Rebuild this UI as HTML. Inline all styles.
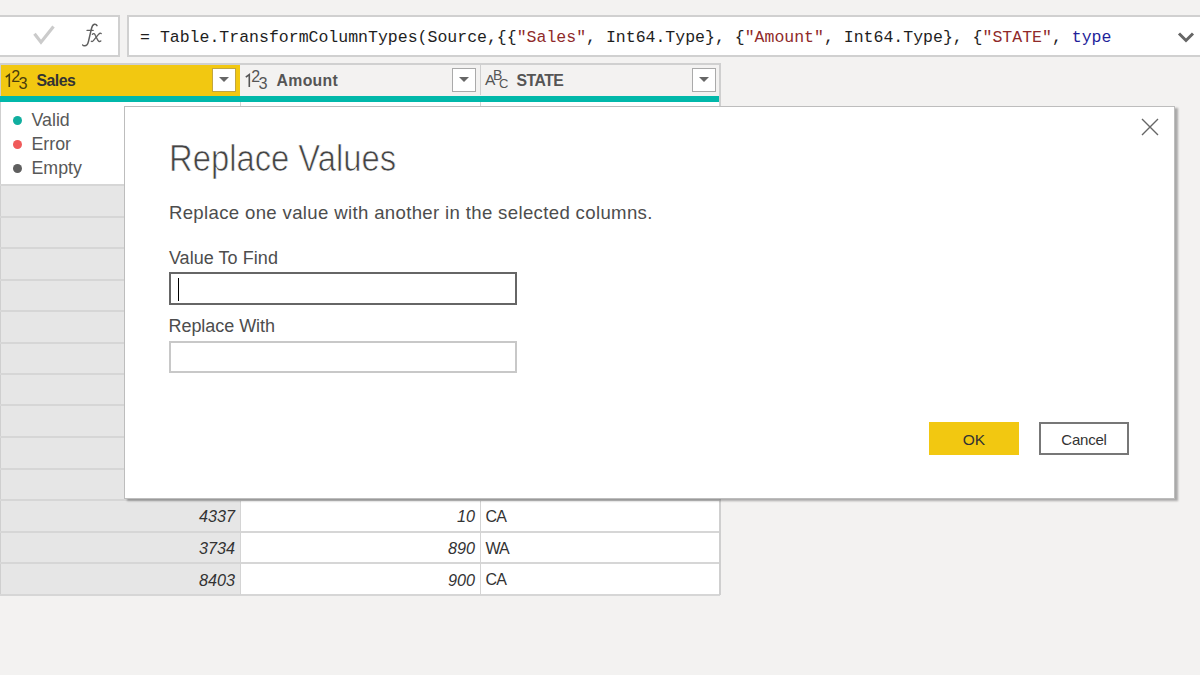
<!DOCTYPE html>
<html><head><meta charset="utf-8">
<style>
*{margin:0;padding:0;box-sizing:border-box}
html,body{width:1200px;height:675px;overflow:hidden;background:#f3f2f1;font-family:"Liberation Sans",sans-serif;position:relative}
.a{position:absolute;white-space:pre}
.line{position:absolute;background:#d2d2d2}
svg{overflow:visible}
</style></head><body>

<div class="a" style="left:-2px;top:15px;width:122px;height:42px;background:#fff;border:2px solid #d0d0d0"></div>
<svg class="a" style="left:0;top:0" width="120" height="60"><path d="M34.5 33.8 L41 42.2 L53.5 26.6" fill="none" stroke="#cbcbcb" stroke-width="3.2"/></svg>
<svg class="a" style="left:0;top:0" width="120" height="60"><g fill="none" stroke="#5f5f5f" stroke-linecap="round"><path d="M97 25.6 Q96.2 23.9 94.4 24.2 Q92.3 24.7 91.4 28.8 L88.4 41.6 Q87.5 45.7 84.7 45.8 Q83.2 45.9 82.7 45" stroke-width="1.5"/><path d="M87 30.4 L93.2 30.4" stroke-width="1.2"/><path d="M92.4 34.2 Q94.2 32.6 95.3 35.2 L97.8 40.2 Q99 42.4 100.8 41" stroke-width="1.4"/><path d="M101.2 33.6 Q100.1 32.6 98.7 34.2 L93.6 40.4 Q92.4 42 91.3 41.3" stroke-width="1.3"/></g></svg>
<div class="a" style="left:127px;top:15px;width:1080px;height:42px;background:#fff;border:2px solid #d0d0d0"></div>
<div class="a" style="left:140.07px;top:27.60px;font-size:16.53px;line-height:20px;font-family:'Liberation Mono',monospace;color:#1e1e1e">= Table.TransformColumnTypes(Source,{{<span style="color:#8f2a2a">"Sales"</span>, Int64.Type}, {<span style="color:#8f2a2a">"Amount"</span>, Int64.Type}, {<span style="color:#8f2a2a">"STATE"</span>, <span style="color:#1f1f9a">type</span></div>
<svg class="a" style="left:1170px;top:25px" width="30" height="25"><path d="M9 8.5 L16 15.5 L23 8.5" fill="none" stroke="#666" stroke-width="3"/></svg>
<div class="a" style="left:0;top:101.5px;width:720px;height:493px;background:#fff"></div>
<div class="a" style="left:0;top:185px;width:240px;height:410px;background:#e6e6e6"></div>
<div class="a" style="left:0;top:63px;width:1px;height:532px;background:#cfcfcf"></div>
<div class="line" style="left:0;top:184px;width:720px;height:2px;background:#d6d6d6"></div>
<div class="line" style="left:0;top:216px;width:720px;height:2px;background:#d6d6d6"></div>
<div class="line" style="left:0;top:247px;width:720px;height:2px;background:#d6d6d6"></div>
<div class="line" style="left:0;top:279px;width:720px;height:2px;background:#d6d6d6"></div>
<div class="line" style="left:0;top:310px;width:720px;height:2px;background:#d6d6d6"></div>
<div class="line" style="left:0;top:342px;width:720px;height:2px;background:#d6d6d6"></div>
<div class="line" style="left:0;top:373px;width:720px;height:2px;background:#d6d6d6"></div>
<div class="line" style="left:0;top:404px;width:720px;height:2px;background:#d6d6d6"></div>
<div class="line" style="left:0;top:436px;width:720px;height:2px;background:#d6d6d6"></div>
<div class="line" style="left:0;top:468px;width:720px;height:2px;background:#d6d6d6"></div>
<div class="line" style="left:0;top:499px;width:720px;height:2px;background:#d6d6d6"></div>
<div class="line" style="left:0;top:531px;width:720px;height:2px;background:#d6d6d6"></div>
<div class="line" style="left:0;top:562px;width:720px;height:2px;background:#d6d6d6"></div>
<div class="line" style="left:0;top:594px;width:720px;height:2px;background:#d6d6d6"></div>
<div class="a" style="left:239.5px;top:101px;width:1.5px;height:494px;background:#d4d4d4"></div>
<div class="a" style="left:479.5px;top:101px;width:1.5px;height:494px;background:#d4d4d4"></div>
<div class="a" style="left:719px;top:63px;width:1.5px;height:532px;background:#cfcfcf"></div>
<div class="a" style="left:13px;top:115.7px;width:9px;height:9px;border-radius:50%;background:#10ae9f"></div>
<div class="a" style="left:31.50px;top:108.93px;font-size:17.8px;line-height:23px;color:#585858">Valid</div>
<div class="a" style="left:13px;top:139.8px;width:9px;height:9px;border-radius:50%;background:#f05a5a"></div>
<div class="a" style="left:31.50px;top:132.78px;font-size:17.8px;line-height:23px;color:#585858">Error</div>
<div class="a" style="left:13px;top:163.9px;width:9px;height:9px;border-radius:50%;background:#5f5f5f"></div>
<div class="a" style="left:31.50px;top:156.63px;font-size:17.8px;line-height:23px;color:#585858">Empty</div>
<div class="a" style="left:0.00px;top:506.49px;font-size:16.2px;line-height:21px;width:235px;text-align:right;font-style:italic;color:#333">4337</div>
<div class="a" style="left:240.00px;top:506.49px;font-size:16.2px;line-height:21px;width:235px;text-align:right;font-style:italic;color:#333">10</div>
<div class="a" style="left:485.50px;top:506.06px;font-size:16px;line-height:21px;color:#333;letter-spacing:-0.9px">CA</div>
<div class="a" style="left:0.00px;top:538.04px;font-size:16.2px;line-height:21px;width:235px;text-align:right;font-style:italic;color:#333">3734</div>
<div class="a" style="left:240.00px;top:538.04px;font-size:16.2px;line-height:21px;width:235px;text-align:right;font-style:italic;color:#333">890</div>
<div class="a" style="left:485.50px;top:537.61px;font-size:16px;line-height:21px;color:#333;letter-spacing:-0.9px">WA</div>
<div class="a" style="left:0.00px;top:569.59px;font-size:16.2px;line-height:21px;width:235px;text-align:right;font-style:italic;color:#333">8403</div>
<div class="a" style="left:240.00px;top:569.59px;font-size:16.2px;line-height:21px;width:235px;text-align:right;font-style:italic;color:#333">900</div>
<div class="a" style="left:485.50px;top:569.16px;font-size:16px;line-height:21px;color:#333;letter-spacing:-0.9px">CA</div>
<div class="a" style="left:0;top:63px;width:720px;height:2px;background:#d0d0d0"></div>
<div class="a" style="left:1px;top:65px;width:239px;height:31px;background:#f2c811"></div>
<div class="a" style="left:240px;top:65px;width:480px;height:31px;background:#f3f2f1"></div>
<div class="a" style="left:0;top:96px;width:720px;height:5.7px;background:#01b8aa"></div>
<div class="a" style="left:479.5px;top:64px;width:1.5px;height:31px;background:#cfcfcf"></div>
<div class="a" style="left:719px;top:63px;width:1.5px;height:39px;background:#cfcfcf"></div>
<svg class="a" style="left:0;top:0" width="1" height="1"><g fill="#4a3c0c" font-family="Liberation Sans"><path d="M5.8 77.2 L9.3 74.6 L9.3 87" fill="none" stroke="#4a3c0c" stroke-width="1.6"/><text x="11.2" y="81.5" font-size="16">2</text><text x="18.6" y="89.2" font-size="16.3">3</text></g></svg>
<div class="a" style="left:36.55px;top:70.23px;font-size:15.8px;line-height:21px;font-weight:bold;color:#333;letter-spacing:-0.5px">Sales</div>
<div class="a" style="left:212px;top:68px;width:24px;height:24px;background:#fff;border:1px solid #c2a640"></div><svg class="a" style="left:212px;top:68px" width="24" height="24"><path d="M7 9 L17 9 L12 14 Z" fill="#666"/></svg>
<svg class="a" style="left:0;top:0" width="1" height="1"><g fill="#555" font-family="Liberation Sans"><path d="M245.8 77.2 L249.3 74.6 L249.3 87" fill="none" stroke="#555" stroke-width="1.6"/><text x="251.2" y="81.5" font-size="16">2</text><text x="258.6" y="89.2" font-size="16.3">3</text></g></svg>
<div class="a" style="left:276.60px;top:70.23px;font-size:15.8px;line-height:21px;font-weight:bold;color:#555;letter-spacing:0.3px">Amount</div>
<div class="a" style="left:452px;top:68px;width:24px;height:24px;background:#fff;border:1px solid #aaa"></div><svg class="a" style="left:452px;top:68px" width="24" height="24"><path d="M7 9 L17 9 L12 14 Z" fill="#666"/></svg>
<svg class="a" style="left:0;top:0" width="1" height="1"><g fill="#555" font-family="Liberation Sans"><text x="485" y="85" font-size="15.5">A</text><text x="493.0" y="80.2" font-size="14">B</text><text x="499.0" y="88" font-size="13">C</text></g></svg>
<div class="a" style="left:516.55px;top:70.23px;font-size:15.8px;line-height:21px;font-weight:bold;color:#555;letter-spacing:-0.55px">STATE</div>
<div class="a" style="left:692px;top:68px;width:24px;height:24px;background:#fff;border:1px solid #aaa"></div><svg class="a" style="left:692px;top:68px" width="24" height="24"><path d="M7 9 L17 9 L12 14 Z" fill="#666"/></svg>
<div class="a" style="left:124px;top:106px;width:1051px;height:393px;background:#fff;border:1px solid #bdbdbd;box-shadow:2.5px 2px 2px rgba(0,0,0,0.3)"></div>
<svg class="a" style="left:1140px;top:117px" width="20" height="20"><path d="M2 2 L18 18 M18 2 L2 18" stroke="#666" stroke-width="1.4" fill="none"/></svg>
<div class="a" style="left:169.35px;top:136.65px;font-size:36.5px;line-height:44px;color:#444;-webkit-text-stroke:0.7px #fff;transform:scaleX(0.898);transform-origin:0 0">Replace Values</div>
<div class="a" style="left:168.90px;top:201.16px;font-size:18.6px;line-height:24px;color:#4d4d4d;letter-spacing:0.34px">Replace one value with another in the selected columns.</div>
<div class="a" style="left:168.90px;top:245.56px;font-size:18px;line-height:24px;color:#4d4d4d;letter-spacing:0.05px">Value To Find</div>
<div class="a" style="left:169px;top:272px;width:348px;height:32.5px;border:2px solid #666;background:#fff"></div>
<div class="a" style="left:178px;top:277.5px;width:1.2px;height:23px;background:#000"></div>
<div class="a" style="left:168.50px;top:313.56px;font-size:18px;line-height:24px;color:#4d4d4d;letter-spacing:-0.05px">Replace With</div>
<div class="a" style="left:169px;top:340.5px;width:348px;height:32px;border:2px solid #c8c8c8;background:#fff"></div>
<div class="a" style="left:929px;top:422px;width:90px;height:32.5px;background:#f2c811"></div>
<div class="a" style="left:929.00px;top:429.63px;font-size:15.5px;line-height:20px;width:90px;text-align:center;color:#333">OK</div>
<div class="a" style="left:1039px;top:422px;width:90px;height:32.5px;border:2px solid #777;background:#fff"></div>
<div class="a" style="left:1039.00px;top:429.55px;font-size:15px;line-height:20px;width:90px;text-align:center;color:#333;letter-spacing:-0.2px">Cancel</div>
</body></html>
